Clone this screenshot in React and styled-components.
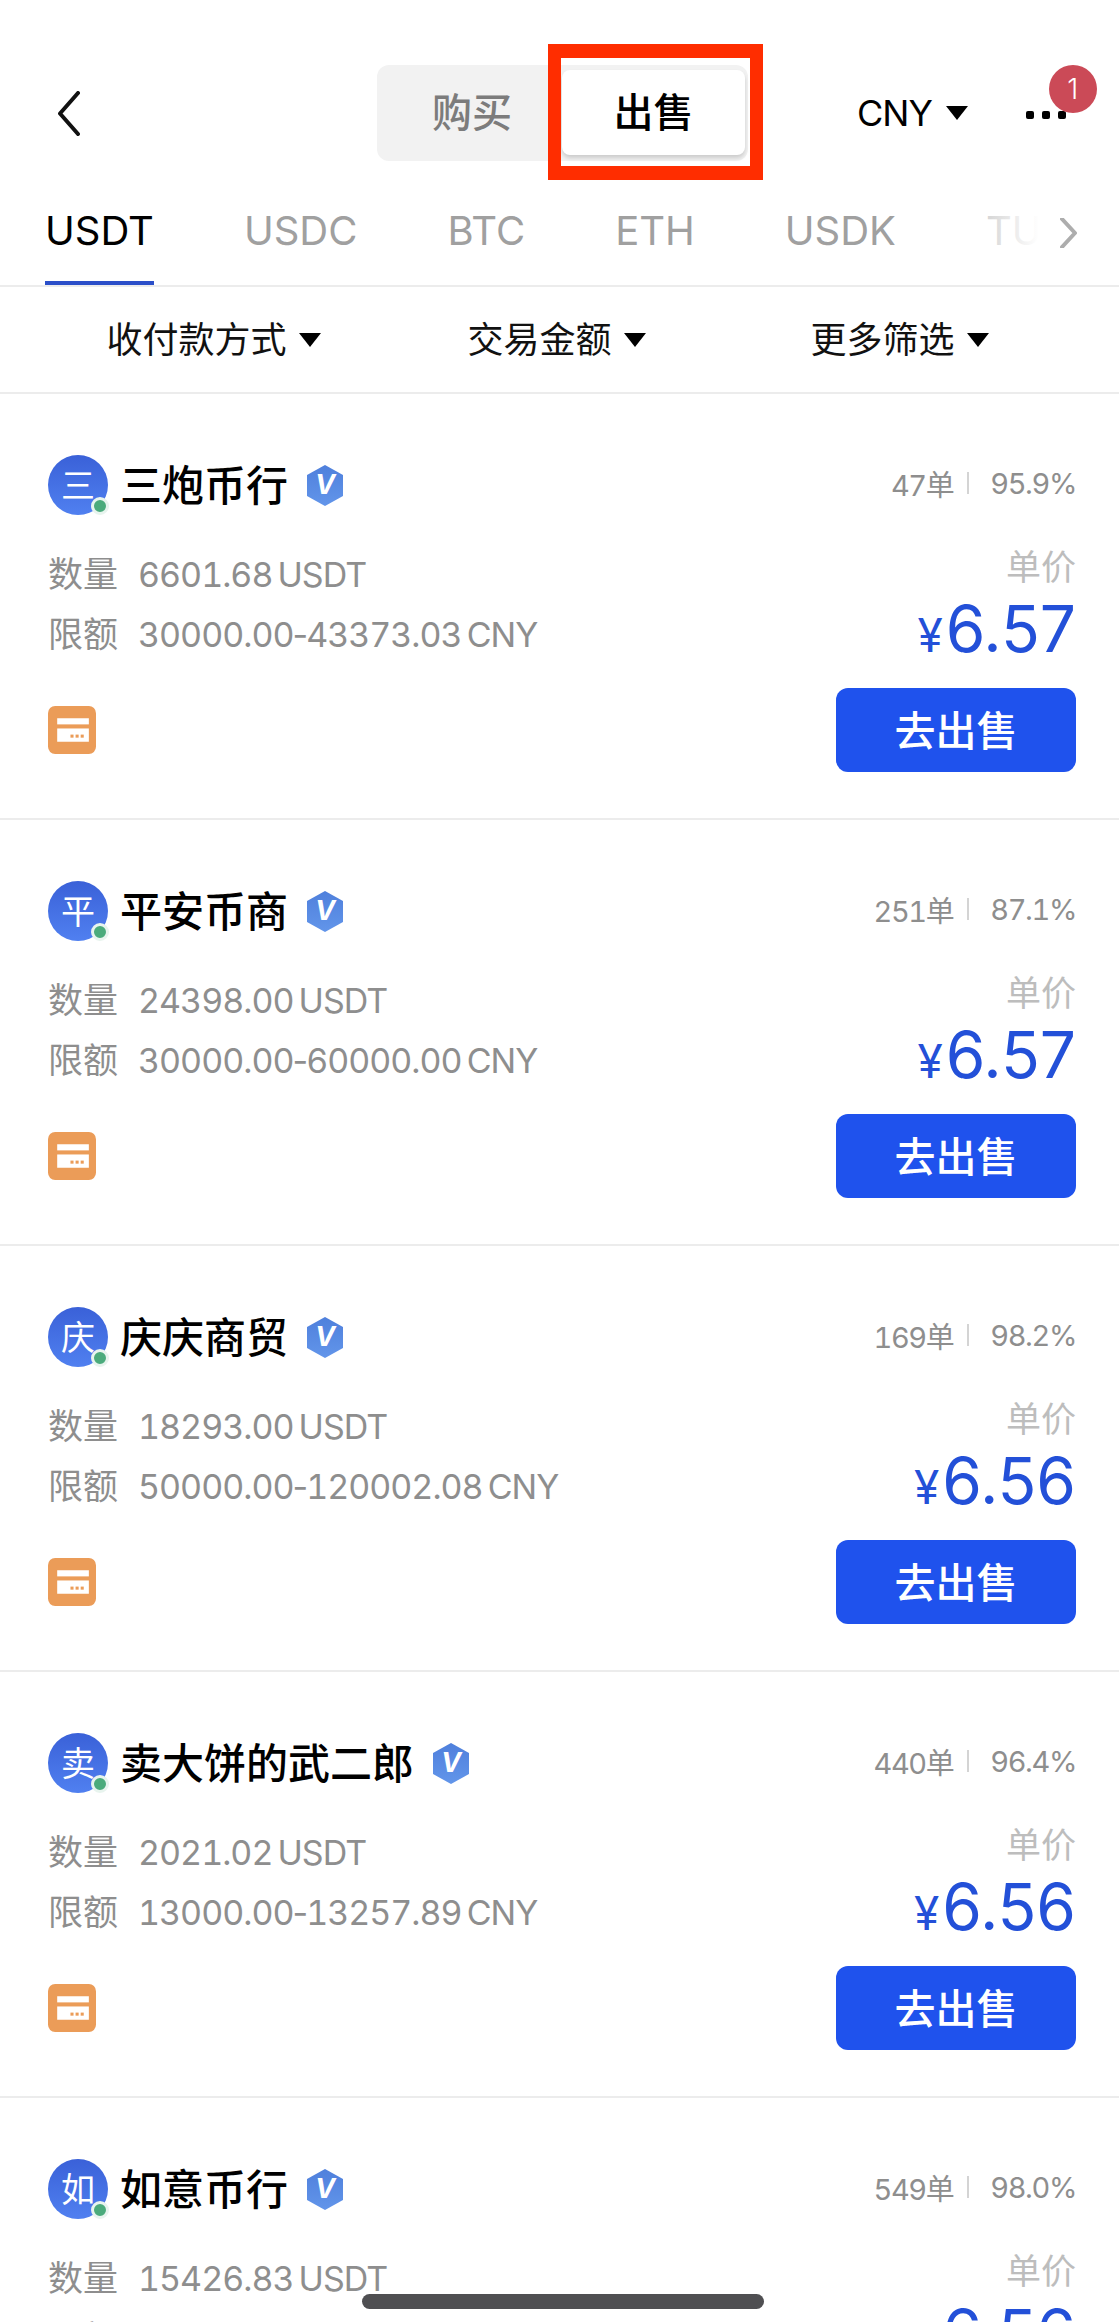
import React from "react";
import styled, { createGlobalStyle } from "styled-components";

const GlobalStyle = createGlobalStyle`
  html, body {
    margin: 0;
    padding: 0;
    background: #fff;
  }
  * {
    box-sizing: border-box;
  }
`;

const offers = [
  { name: "三炮币行", mark: "三", orders: "47单", rate: "95.9%", amount: "6601.68 USDT", limit: "30000.00-43373.03 CNY", price: "6.57" },
  { name: "平安币商", mark: "平", orders: "251单", rate: "87.1%", amount: "24398.00 USDT", limit: "30000.00-60000.00 CNY", price: "6.57" },
  { name: "庆庆商贸", mark: "庆", orders: "169单", rate: "98.2%", amount: "18293.00 USDT", limit: "50000.00-120002.08 CNY", price: "6.56" },
  { name: "卖大饼的武二郎", mark: "卖", orders: "440单", rate: "96.4%", amount: "2021.02 USDT", limit: "13000.00-13257.89 CNY", price: "6.56" },
  { name: "如意币行", mark: "如", orders: "549单", rate: "98.0%", amount: "15426.83 USDT", limit: "30000.00-43373.03 CNY", price: "6.56" },
];

const tabs = ["USDT", "USDC", "BTC", "ETH", "USDK", "TUSD"];
const filters = ["收付款方式", "交易金额", "更多筛选"];

const App = () => {
  return (
    <Page>
      <GlobalStyle />
      <Header>
        <BackIcon width="23" height="45" viewBox="0 0 23 45">
          <path d="M21 2 L3 22.5 L21 43" />
        </BackIcon>
        <Segment>
          <BuyOption>购买</BuyOption>
          <SellOption>出售</SellOption>
          <RedFrame />
        </Segment>
        <Currency>
          CNY
          <Caret $size={22} />
        </Currency>
        <More>
          <Dot />
          <Dot />
          <Dot />
          <Badge>1</Badge>
        </More>
      </Header>

      <TabBar>
        {tabs.map((tab, i) => (
          <Tab key={tab} $active={i === 0}>
            {tab}
          </Tab>
        ))}
        <TabFade />
        <TabArrow width="17" height="30" viewBox="0 0 17 30">
          <path d="M2 1 L15 15 L2 29" />
        </TabArrow>
      </TabBar>

      <FilterBar>
        {filters.map((filter) => (
          <Filter key={filter}>
            <FilterText>{filter}</FilterText>
            <Caret $size={22} />
          </Filter>
        ))}
      </FilterBar>

      {offers.map((offer) => {
        const [limitLow, limitHigh] = offer.limit.split("-");
        return (
          <Card key={offer.name}>
            <CardHead>
              <Merchant>
                <Avatar>
                  {offer.mark}
                  <OnlineDot />
                </Avatar>
                <Name>{offer.name}</Name>
                <VerifiedIcon width="36" height="41" viewBox="0 0 36 41">
                  <defs>
                    <linearGradient id="hex" x1="0" y1="0" x2="0" y2="1">
                      <stop offset="0" stopColor="#4f80dc" />
                      <stop offset="1" stopColor="#6295ea" />
                    </linearGradient>
                  </defs>
                  <polygon points="18,0 36,10 36,31 18,41 0,31 0,10" fill="url(#hex)" />
                  <text x="18" y="29" textAnchor="middle" fontSize="27" fontWeight="700" fontStyle="italic" fill="#fff" fontFamily="Inter, sans-serif">
                    V
                  </text>
                </VerifiedIcon>
              </Merchant>
              <Stats>
                {offer.orders}
                <StatSep />
                {offer.rate}
              </Stats>
            </CardHead>
            <CardBody>
              <Details>
                <DetailRow>
                  <DetailLabel>数量</DetailLabel>
                  {offer.amount}
                </DetailRow>
                <DetailRow>
                  <DetailLabel>限额</DetailLabel>
                  {limitLow}
                  <LimitDash>-</LimitDash>
                  {limitHigh}
                </DetailRow>
                <PayIcon width="48" height="48" viewBox="0 0 47 47">
                  <rect width="47" height="47" rx="7" fill="#eb9c58" />
                  <rect x="9" y="12" width="31" height="6" fill="#fff" />
                  <rect x="9" y="22" width="31" height="13" fill="#fff" />
                  <rect x="22" y="28" width="3" height="3" fill="#eb9c58" />
                  <rect x="27" y="28" width="3" height="3" fill="#eb9c58" />
                  <rect x="32" y="28" width="3" height="3" fill="#eb9c58" />
                </PayIcon>
              </Details>
              <PriceColumn>
                <PriceLabel>单价</PriceLabel>
                <Price>
                  <Yen>¥</Yen>
                  {offer.price}
                </Price>
                <SellButton>去出售</SellButton>
              </PriceColumn>
            </CardBody>
          </Card>
        );
      })}

      <HomeBar />
    </Page>
  );
};

const fontStack = `Inter, "Noto Sans CJK SC", sans-serif`;

const Page = styled.div`
  position: relative;
  width: 1119px;
  height: 2322px;
  overflow: hidden;
  background: #fff;
  font-family: ${fontStack};
  color: #000;
`;

const Header = styled.div`
  display: flex;
  align-items: center;
  height: 195px;
  padding: 65px 0 34px 57px;
`;

const BackIcon = styled.svg`
  fill: none;
  stroke: #111;
  stroke-width: 4;
  stroke-linecap: round;
  stroke-linejoin: round;
`;

const Segment = styled.div`
  position: relative;
  display: flex;
  width: 371px;
  height: 96px;
  margin-left: 297px;
  padding: 5px 3px 6px 5px;
  background: #f2f2f2;
  border-radius: 12px;
`;

const BuyOption = styled.div`
  display: flex;
  align-items: center;
  justify-content: center;
  width: 180px;
  padding-bottom: 6px;
  font-size: 40px;
  font-weight: 500;
  color: #7c7c7c;
`;

const SellOption = styled.div`
  display: flex;
  align-items: center;
  justify-content: center;
  width: 183px;
  padding-bottom: 6px;
  font-size: 40px;
  font-weight: 500;
  color: #000;
  background: #fff;
  border-radius: 8px;
  box-shadow: 0 3px 4px rgba(0, 0, 0, 0.16);
`;

const RedFrame = styled.div`
  position: absolute;
  left: 171px;
  top: -21px;
  width: 215px;
  height: 136px;
  border: 14px solid #ff2d00;
  border-left-width: 13px;
  border-right-width: 13px;
`;

const Currency = styled.div`
  display: flex;
  align-items: center;
  gap: 14px;
  margin-left: 109px;
  font-size: 36px;
  letter-spacing: -1px;
`;

const Caret = styled.span`
  display: inline-block;
  width: 0;
  height: 0;
  border-left: ${(p) => p.$size / 2}px solid transparent;
  border-right: ${(p) => p.$size / 2}px solid transparent;
  border-top: ${(p) => p.$size * 0.66}px solid #000;
`;

const More = styled.div`
  position: relative;
  display: flex;
  gap: 8px;
  margin-left: 58px;
  padding-top: 4px;
`;

const Dot = styled.span`
  width: 8px;
  height: 8px;
  border-radius: 2px;
  background: #000;
`;

const Badge = styled.span`
  position: absolute;
  left: 23px;
  top: -42px;
  display: flex;
  align-items: center;
  justify-content: center;
  width: 48px;
  height: 48px;
  border-radius: 50%;
  background: #cb4a57;
  color: #fff;
  font-size: 28px;
  font-weight: 300;
`;

const TabBar = styled.div`
  position: relative;
  display: flex;
  gap: 90px;
  height: 92px;
  padding: 8px 0 0 45px;
  border-bottom: 2px solid #ececec;
  overflow: hidden;
`;

const Tab = styled.div`
  height: 82px;
  padding-top: 3px;
  font-size: 40px;
  line-height: 50px;
  color: ${(p) => (p.$active ? "#000" : "#a0a0a0")};
  border-bottom: 4px solid ${(p) => (p.$active ? "#2b4fc9" : "transparent")};
`;

const TabFade = styled.div`
  position: absolute;
  left: 985px;
  top: 0;
  width: 134px;
  height: 88px;
  background: linear-gradient(to right, rgba(255, 255, 255, 0.55), #fff 40%);
`;

const TabArrow = styled.svg`
  position: absolute;
  left: 1060px;
  top: 23px;
  fill: none;
  stroke: #adadad;
  stroke-width: 4;
  stroke-linecap: round;
  stroke-linejoin: round;
`;

const FilterBar = styled.div`
  display: grid;
  grid-template-columns: repeat(3, 343px);
  height: 107px;
  padding-left: 42px;
  border-bottom: 2px solid #ececec;
`;

const Filter = styled.div`
  display: flex;
  align-items: center;
  justify-content: center;
  gap: 12px;
`;

const FilterText = styled.span`
  padding-bottom: 5px;
  font-size: 36px;
  color: #111;
`;

const Card = styled.div`
  flex-shrink: 0;
  height: 426px;
  padding: 60px 43px 0 48px;
  border-bottom: 2px solid #ececec;
`;

const CardHead = styled.div`
  display: flex;
  align-items: center;
  justify-content: space-between;
  height: 62px;
`;

const Merchant = styled.div`
  display: flex;
  align-items: center;
`;

const Avatar = styled.div`
  position: relative;
  display: flex;
  align-items: center;
  justify-content: center;
  width: 60px;
  height: 60px;
  padding-bottom: 3px;
  border-radius: 50%;
  background: linear-gradient(#3a61d8, #5080f0);
  color: #fff;
  font-size: 34px;
`;

const OnlineDot = styled.span`
  position: absolute;
  right: -1px;
  bottom: 0;
  width: 18px;
  height: 18px;
  border-radius: 50%;
  background: #4bab7c;
  border: 3px solid #e8f4ee;
`;

const Name = styled.div`
  margin-left: 12px;
  padding-bottom: 5px;
  font-size: 42px;
  font-weight: 500;
  color: #000;
`;

const VerifiedIcon = styled.svg`
  margin-left: 19px;
`;

const Stats = styled.div`
  display: flex;
  align-items: center;
  padding-bottom: 4px;
  font-size: 29px;
  font-variant-numeric: tabular-nums;
  letter-spacing: -1.4px;
  color: #8e8e8e;
`;

const StatSep = styled.span`
  width: 2px;
  height: 22px;
  margin: 0 21px 0 14px;
  background: #d4d4d4;
`;

const CardBody = styled.div`
  display: flex;
  justify-content: space-between;
  margin-top: 28px;
`;

const Details = styled.div`
  display: flex;
  flex-direction: column;
  align-items: flex-start;
`;

const DetailRow = styled.div`
  height: 60px;
  font-size: 34px;
  font-variant-numeric: tabular-nums;
  line-height: 60px;
  color: #8e8e8e;
  letter-spacing: -1px;
  word-spacing: -3px;
`;

const DetailLabel = styled.span`
  margin-right: 20px;
  font-size: 35px;
  letter-spacing: 0;
`;

const LimitDash = styled.span`
  margin: 0 -1px;
  font-variant-numeric: normal;
`;

const PayIcon = styled.svg`
  margin-top: 42px;
`;

const PriceColumn = styled.div`
  display: flex;
  flex-direction: column;
  align-items: flex-end;
  padding-top: 3px;
`;

const PriceLabel = styled.div`
  height: 40px;
  font-size: 35px;
  line-height: 40px;
  color: #bdbdbd;
`;

const Price = styled.div`
  height: 70px;
  margin-top: 7px;
  font-size: 64px;
  line-height: 70px;
  color: #2350d8;
`;

const Yen = styled.span`
  margin-right: 3px;
  font-size: 46px;
`;

const SellButton = styled.button`
  width: 240px;
  height: 84px;
  margin-top: 24px;
  padding-bottom: 6px;
  border: 0;
  border-radius: 12px;
  background: #1f52ed;
  color: #fff;
  font-family: ${fontStack};
  font-size: 41px;
  font-weight: 500;
`;

const HomeBar = styled.div`
  position: absolute;
  left: 362px;
  bottom: 13px;
  width: 402px;
  height: 15px;
  border-radius: 8px;
  background: #4f4f52;
`;

export default App;
